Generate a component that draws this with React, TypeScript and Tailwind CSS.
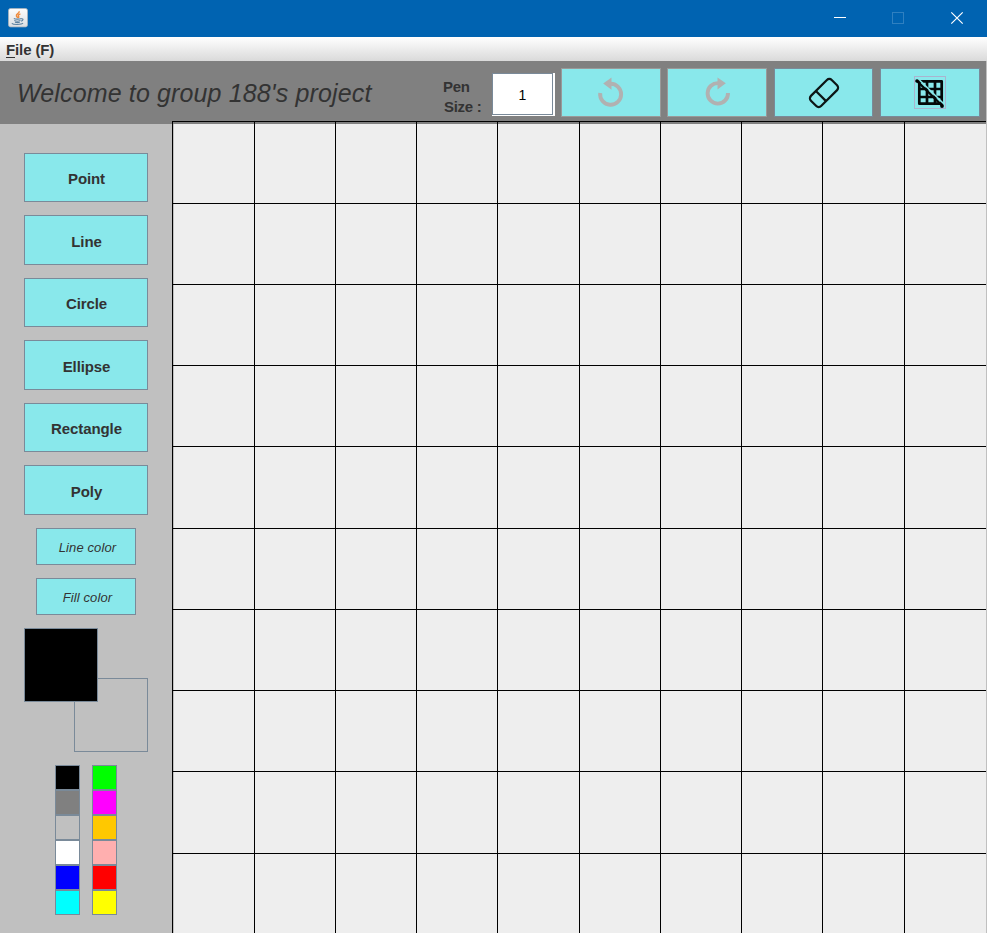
import React from "react";

const shapes = [
  { name: "Point", size: "h-[49px] mb-[13px]" },
  { name: "Line", size: "h-[50px] mb-[13px]" },
  { name: "Circle", size: "h-[49px] mb-[13px]" },
  { name: "Ellipse", size: "h-[50px] mb-[13px]" },
  { name: "Rectangle", size: "h-[49px] mb-[13px]" },
  { name: "Poly", size: "h-[50px] mb-[13px]" },
];

const leftColors = ["bg-black", "bg-[#808080]", "bg-[#c0c0c0]", "bg-white", "bg-[#0000ff]", "bg-[#00ffff]"];
const rightColors = ["bg-[#00ff00]", "bg-[#ff00ff]", "bg-[#ffc800]", "bg-[#ffafaf]", "bg-[#ff0000]", "bg-[#ffff00]"];

function JavaIcon() {
  return (
    <svg width="20" height="20" viewBox="0 0 20 20" className="block">
      <defs>
        <linearGradient id="tile" x1="0" y1="0" x2="0" y2="1">
          <stop offset="0" stopColor="#fdfdfd" />
          <stop offset="1" stopColor="#dcdfe2" />
        </linearGradient>
      </defs>
      <rect x="0.5" y="0.5" width="19" height="18.4" rx="2" fill="url(#tile)" stroke="#a9b4bd" strokeWidth="0.8" />
      <path d="M11 3.200c1.200 2-3.400 2.800-2.600 4.700.3.700 1 1.200 1.300 2.100M12.400 5.800c-1.800.7-2.700 1.500-1.800 2.500.5.600.2 1.100-.2 1.700" fill="none" stroke="#ee8a3c" strokeWidth="1.400" />
      <path d="M5.800 10.600c1.500.8 6 .7 7.600 0M6.300 12.600c1.700.7 4.600.6 6.200 0M7 14.200c1.500.5 3.500.5 4.800 0M3.800 15.400c1.500 1.500 9.800 1.400 11.200-.2M13.400 10.800c2.400-.4 1.900 1.800-.3 2.300" fill="none" stroke="#5d82a0" strokeWidth="1.100" />
    </svg>
  );
}

function Swatches({ colors }: { colors: string[] }) {
  return (
    <div className="flex w-[25px] flex-col">
      {colors.map((c) => (
        <div key={c} className={`h-[25px] border border-[#7a8a99] ${c}`} />
      ))}
    </div>
  );
}

export default function App() {
  return (
    <div className="flex h-[933px] w-[987px] flex-col overflow-hidden bg-[#c0c0c0] font-['Liberation_Sans',Arial,sans-serif] text-[#333333]">
      <div className="flex h-[37px] shrink-0 items-start bg-[#0063b1] pl-2">
        <div className="pt-2">
          <JavaIcon />
        </div>
        <svg className="ml-auto block" width="167" height="37" viewBox="0 0 167 37" fill="none">
          <path d="M14 17.500h12" stroke="#fff" />
          <rect x="72.500" y="12.500" width="11" height="11" stroke="#2f80c0" />
          <path d="M131.300 12.300l11.400 11.400M142.700 12.300l-11.400 11.400" stroke="#fff" strokeWidth="1.200" />
        </svg>
      </div>

      <div className="flex h-6 shrink-0 items-center bg-linear-to-b from-white to-[#dadada] pl-1.5 text-[15px] font-bold tracking-[-0.12px]">
        <span className="pt-0.5 leading-none">
          <span className="inline-block h-4 border-b border-[#333333]">F</span>ile (F)
        </span>
      </div>

      <div className="flex h-[60px] shrink-0 items-start bg-[#808080] pt-[7px] shadow-[inset_-1px_0_0_#c0c0c0]">
        <h1 className="w-[443px] pt-[10px] pl-[17px] text-[25px] leading-[30px] tracking-[0.14px] whitespace-nowrap italic">Welcome to group 188's project</h1>
        <div className="w-[49px] pt-[9px] text-[15px] leading-5 font-bold tracking-[-0.3px] whitespace-nowrap">
          <div>Pen</div>
          <div className="pl-px">Size :</div>
        </div>
        <div className="mt-[5px] mr-1.5 h-[43px] w-[63px] bg-white pr-[2px] pb-px">
          <div className="flex h-[42px] w-[61px] items-center justify-center border border-[#7a8a99] bg-white pt-0.5 text-[14px] text-black">1</div>
        </div>
        <button className="mr-1.5 h-[49px] w-[100px] border border-[#999999] bg-[#89e8eb]">
          <svg className="block" width="98" height="47" viewBox="562 69 98 47">
            <path d="M610 83.800A10.500 10.500 0 1 1 600.200 93" fill="none" stroke="#b1b1b1" strokeWidth="3.900" />
            <path d="M603.200 83.500L611.500 77.500v12.300z" fill="#b1b1b1" />
          </svg>
        </button>
        <button className="mr-[7px] h-[49px] w-[100px] border border-[#999999] bg-[#89e8eb]">
          <svg className="block" width="98" height="47" viewBox="668 69 98 47">
            <path d="M718.500 83.200A10.200 10.200 0 1 0 728 93" fill="none" stroke="#b1b1b1" strokeWidth="3.900" />
            <path d="M725.800 83.300L717.500 77.500v12z" fill="#b1b1b1" />
          </svg>
        </button>
        <button className="mr-[7px] h-[49px] w-[99px] border border-[#7a8a99] bg-[#89e8eb]">
          <svg className="block" width="97" height="47" viewBox="775 69 97 47">
            <g transform="translate(824 93) rotate(-45)" fill="none" stroke="#0c1515" strokeWidth="2.200">
              <rect x="-14.700" y="-7.200" width="29.400" height="14.400" rx="3.400" />
              <path d="M-4.300 -7.200v14.400" />
            </g>
          </svg>
        </button>
        <button className="h-[49px] w-[100px] border border-[#7a8a99] bg-[#89e8eb]">
          <svg className="block" width="98" height="47" viewBox="881 69 98 47">
            <rect x="914.500" y="76.500" width="31" height="32" fill="none" stroke="#a9b4cf" />
            <path d="M919.300 81.300h22.400v22.400h-22.400zM927 81v23M935 81v23M919 89h23M919 97h23" fill="none" stroke="#040808" strokeWidth="2.700" strokeLinejoin="round" />
            <path d="M919.500 80l24.500 24" stroke="#89e8eb" strokeWidth="1.600" />
            <path d="M916.500 80.500l26 25.500" stroke="#040808" strokeWidth="2.400" />
            <circle cx="917" cy="81" r="1.800" />
            <circle cx="942" cy="106" r="1.900" />
          </svg>
        </button>
      </div>

      <div className="flex min-h-0 flex-1">
        <aside className="flex w-[172px] shrink-0 flex-col border-t-3 border-[#808080] pt-[29px] pl-6">
          {shapes.map((s) => (
            <button key={s.name} className={`w-[124px] shrink-0 border border-[#7a8a99] bg-[#89e8eb] pt-1 pl-px text-[15px] font-bold tracking-[-0.1px] ${s.size}`}>
              {s.name}
            </button>
          ))}
          {["Line color", "Fill color"].map((label) => (
            <button key={label} className="mb-[13px] ml-3 h-[37px] w-[100px] shrink-0 border border-[#7a8a99] bg-[#89e8eb] pt-0.5 pl-[3px] text-[13px] tracking-[0.12px] italic">
              {label}
            </button>
          ))}
          <div className="grid h-[124px] w-[124px] shrink-0">
            <div className="col-start-1 row-start-1 h-[74px] w-[74px] self-end justify-self-end border border-[#7a8a99]" />
            <div className="col-start-1 row-start-1 h-[74px] w-[74px] border border-[#7a8a99] bg-black" />
          </div>
          <div className="mt-[13px] ml-[31px] flex gap-3">
            <Swatches colors={leftColors} />
            <Swatches colors={rightColors} />
          </div>
        </aside>
        <main className="grid w-[814px] shrink-0 grid-cols-[82px_81px_81px_81px_82px_81px_81px_81px_82px_82px] grid-rows-[82px_81px_81px_81px_82px_81px_81px_81px_82px_80px] bg-[#eeeeee] shadow-[inset_0_3px_0_#808080,inset_2px_0_0_#c0c0c0]">
          {Array.from({ length: 100 }, (_, i) => (
            <div key={i} className="border-t border-l border-black" />
          ))}
        </main>
      </div>
    </div>
  );
}
